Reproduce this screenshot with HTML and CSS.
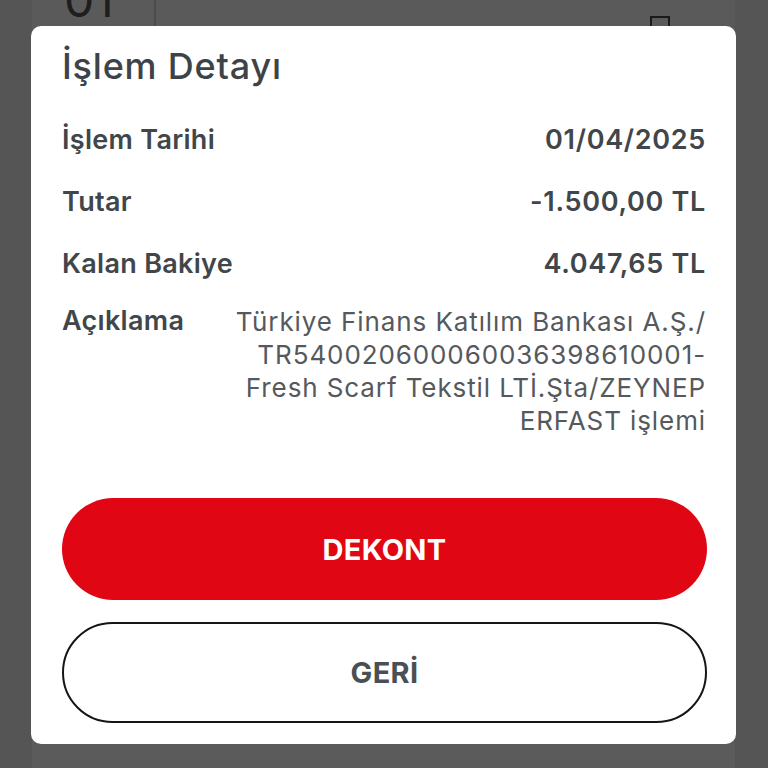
FILE: index.html
```html
<!DOCTYPE html>
<html lang="tr">
<head>
<meta charset="utf-8">
<link rel="stylesheet" href="styles.css">
</head>
<body>
<div class="screen">
  <div class="behind">
    <div class="behind-card">
      <div class="behind-day">01</div>
      <div class="behind-divider"></div>
      <div class="behind-icon"></div>
    </div>
    <div class="behind-card lower"></div>
  </div>
  <div class="modal">
    <h1 class="title">İşlem Detayı</h1>
    <div class="rows">
      <div class="row"><span class="label">İşlem Tarihi</span><span class="value">01/04/2025</span></div>
      <div class="row"><span class="label">Tutar</span><span class="value">-1.500,00 TL</span></div>
      <div class="row"><span class="label">Kalan Bakiye</span><span class="value">4.047,65 TL</span></div>
      <div class="row desc-row"><span class="label">Açıklama</span><span class="desc">Türkiye Finans Katılım Bankası A.Ş./<br>TR540020600060036398610001-<br>Fresh Scarf Tekstil LTİ.Şta/ZEYNEP<br>ERFAST işlemi</span></div>
    </div>
    <div class="actions">
      <button class="btn primary">DEKONT</button>
      <button class="btn secondary">GERİ</button>
    </div>
  </div>
</div>
</body>
</html>
```

FILE: styles.css
```css
html, body {
  margin: 0;
  padding: 0;
  background: #555555;
}
.screen {
  position: relative;
  width: 768px;
  height: 768px;
  overflow: hidden;
  background: #555555;
  font-family: Inter, "Noto Sans", sans-serif;
}
.behind {
  margin-left: 32px;
  width: 703px;
  height: 768px;
  display: flex;
  flex-direction: column;
  gap: 6px;
}
.behind-card {
  position: relative;
  height: 742px;
  background: #5a5a5a;
  display: flex;
}
.behind-card.lower {
  height: 40px;
  background: #5b5b5b;
}
.behind-day {
  position: absolute;
  left: 32px;
  top: -28px;
  font-size: 48px;
  line-height: 56px;
  color: #1e1e1e;
  font-weight: 400;
}
.behind-divider {
  position: absolute;
  left: 122px;
  top: 0;
  width: 2px;
  height: 30px;
  background: #4c4c4c;
}
.behind-icon {
  position: absolute;
  left: 618px;
  top: 16px;
  width: 16px;
  height: 14px;
  border: 2px solid #1a1a1a;
  border-bottom: none;
}
.modal {
  position: absolute;
  left: 31px;
  top: 26px;
  width: 705px;
  height: 718px;
  background: #ffffff;
  border-radius: 10px;
  box-sizing: border-box;
  padding: 18px 30px 0 31px;
  display: flex;
  flex-direction: column;
}
.title {
  margin: 0;
  font-size: 36px;
  font-weight: 500;
  color: #3e4347;
  line-height: 44px;
  letter-spacing: 0.8px;
}
.rows {
  margin-top: 34px;
  display: flex;
  flex-direction: column;
  gap: 26px;
}
.row {
  display: flex;
  justify-content: space-between;
  align-items: flex-start;
  line-height: 36px;
}
.label {
  font-size: 27px;
  font-weight: 600;
  color: #41464b;
  letter-spacing: 0.3px;
}
.value {
  font-size: 27px;
  font-weight: 600;
  color: #41464b;
  letter-spacing: 0.7px;
}
.desc-row {
  margin-top: -5px;
}
.desc {
  text-align: right;
  font-size: 26px;
  font-weight: 400;
  color: #55595d;
  line-height: 33px;
  padding-top: 2px;
  letter-spacing: 0.9px;
}
.actions {
  margin-top: 61px;
  display: flex;
  flex-direction: column;
  gap: 22px;
}
.btn {
  width: 645px;
  height: 102px;
  border-radius: 51px;
  font-family: inherit;
  font-size: 29px;
  font-weight: 700;
  letter-spacing: 0.3px;
  cursor: pointer;
}
.primary {
  background: #e10613;
  color: #ffffff;
  border: none;
}
.secondary {
  background: #ffffff;
  color: #4a4f54;
  border: 2px solid #151515;
  height: 101px;
}
```
